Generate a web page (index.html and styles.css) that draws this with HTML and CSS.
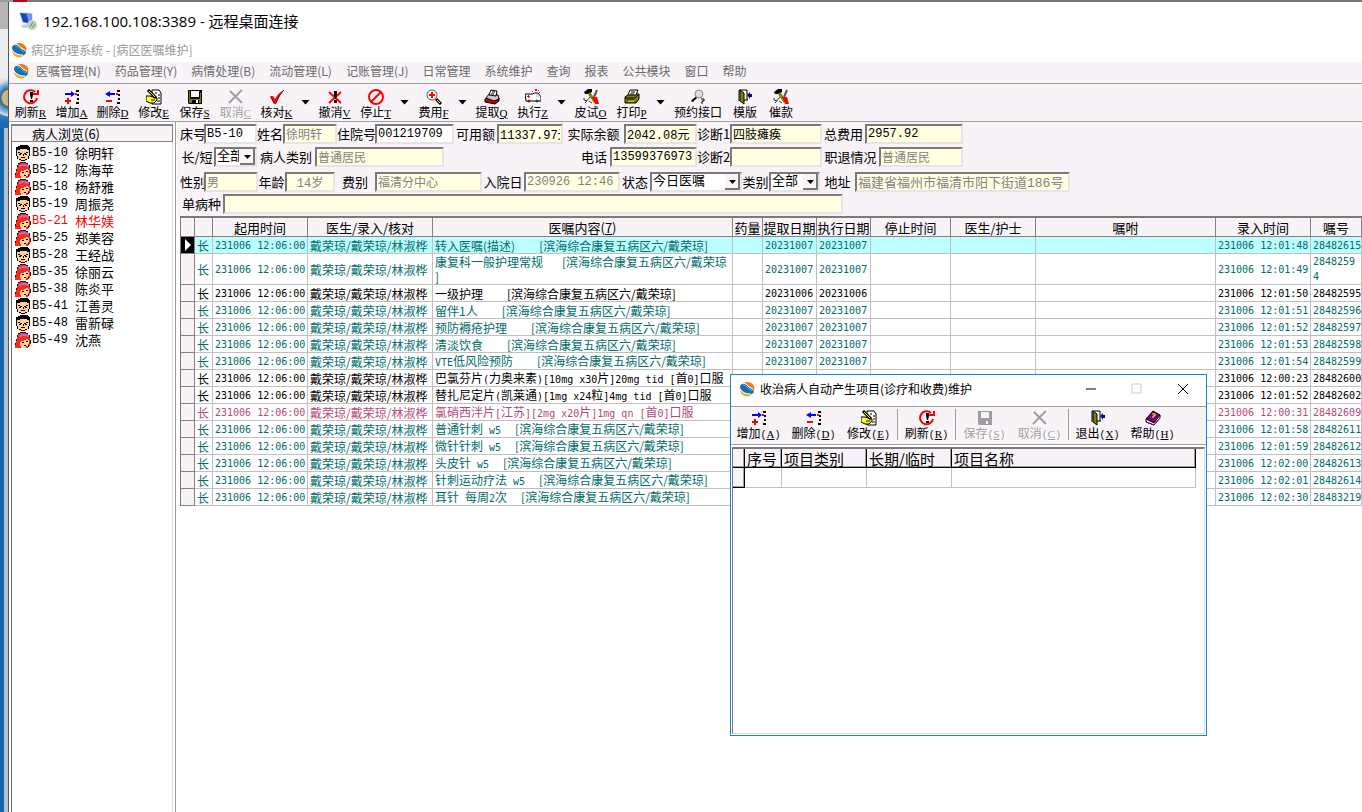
FILE: index.html
```
<!DOCTYPE html>
<html lang="zh-CN">
<head>
  <meta charset="utf-8">
  <title>病区护理系统</title>
  <link rel="stylesheet" href="styles.css">
</head>
<body>
  <svg class="defs" aria-hidden="true">
    <symbol id="i-logo" viewBox="0 0 16 16">
      <path d="M1 6C1 3 4 2 6 3c3 1 4 4 7 5 1 1 2 2 2 3-1 2-4 3-6 2C5 12 1 9 1 6z" fill="#1271b6"/>
      <path d="M4 2C8 0 13 1 15 5c1 2 0 4 0 5-1-2-3-3-5-4C8 4 7 2 4 2z" fill="#f47b0a"/>
      <path d="M1 8c1 3 4 4 7 5 2 0 4 0 5 0-2 3-7 3-9 1C2 13 1 11 1 8z" fill="#f7a823"/>
      <path d="M4 4c3 0 5 3 9 6" stroke="#63b5e6" stroke-width="1" fill="none"/>
      <path d="M5 2c3 1 4 4 9 6" stroke="#fff" stroke-width="1" fill="none"/>
      <path d="M1 8c2 3 5 5 11 5" stroke="#fff" stroke-width="1" fill="none"/>
    </symbol>
    <symbol id="i-remote" viewBox="0 0 20 20">
      <path d="M1 1l14 1v12L4 12z" fill="#dfe6f2"/>
      <path d="M2 2l12 1v10L5 11z" fill="#1c3fc4"/>
      <path d="M8 2l6 1v10l-3-1z" fill="#6f95ee"/>
      <path d="M3 14l8-1 3 3-9 1z" fill="#c3c9d6"/>
      <circle cx="14" cy="14" r="5" fill="#c4cfc4"/>
      <path d="M12 16l3-5M14 17l3-4" stroke="#4e9a4e" fill="none"/>
    </symbol>
    <symbol id="i-refresh" viewBox="0 0 16 16">
      <path d="M12 3a6.500 6.500 0 1 0 2 6" fill="none" stroke="#f00" stroke-width="2"/>
      <path d="M10 6h6V1h-2v3h-4z" fill="#f00"/>
      <path d="M7 3h3v3l-1 4H8L7 6zM7 11h3v2H7z" fill="#000"/>
    </symbol>
    <symbol id="i-add" viewBox="0 0 16 16">
      <path d="M1 4h6V2l4 3-4 3V6H1z" fill="#00f"/>
      <path d="M3 9h2v2h2v2H5v2H3v-2H1v-2h2z" fill="#f00"/>
      <path d="M12 1h3v2h-3zM13 5h2v2h-2zM13 9h2v2h-2zM12 13h3v2h-3z" fill="#000"/>
      <path d="M11 4h2v2h-2z" fill="#f00"/>
    </symbol>
    <symbol id="i-del" viewBox="0 0 16 16">
      <path d="M10 4H5V2L0 5l5 3V6h5z" fill="#00f"/>
      <path d="M1 11h6v2H1zM11 4h2v2h-2z" fill="#f00"/>
      <path d="M12 1h3v2h-3zM13 5h2v2h-2zM13 9h2v2h-2zM12 13h3v2h-3z" fill="#000"/>
    </symbol>
    <symbol id="i-edit" viewBox="0 0 16 16">
      <path d="M6 1h7l2 3v11H6z" fill="#fff" stroke="#000"/>
      <path d="M9 4h2M12 6h2M12 9h2M11 12h3" stroke="#000" fill="none"/>
      <path d="M0 7h4l3 1 4 1v2l-3 3H4l-4-2z" fill="#ffff2e" stroke="#000"/>
      <path d="M2 1l8 8" stroke="#000" stroke-width="3" fill="none"/>
      <path d="M3 2l6 6" stroke="#ff0" fill="none"/>
      <path d="M5 11h4" stroke="#000" fill="none"/>
    </symbol>
    <symbol id="i-save" viewBox="0 0 16 16">
      <path d="M1 1h14v14H2l-1-1z" fill="#000"/>
      <path d="M2 2h1v8h10V4h1v10H2z" fill="#808000"/>
      <path d="M4 2h8v6H4z" fill="#f7f3f7"/>
      <path d="M5 11h7v3H5z" fill="#000"/>
      <path d="M9 11h2v3H9z" fill="#fff"/>
    </symbol>
    <symbol id="i-saveoff" viewBox="0 0 16 16">
      <path d="M1 1h14v14H2l-1-1z" fill="#a09da0"/>
      <path d="M4 2h8v6H4zM9 11h2v3H9z" fill="#f7f3f7"/>
    </symbol>
    <symbol id="i-cancel" viewBox="0 0 16 16">
      <path d="M3 3l12 12M15 2L2 15" stroke="#fff" stroke-width="2" fill="none"/>
      <path d="M2 2l12 12M14 1L1 14" stroke="#a09da0" stroke-width="2" fill="none"/>
    </symbol>
    <symbol id="i-check" viewBox="0 0 16 16">
      <path d="M1 7l3 0 2 3C8 6 11 3 15 1 12 5 9 9 7 15H5z" fill="#f00"/>
      <path d="M2 8l3 6M7 14c2-6 5-10 8-13" stroke="#800000" fill="none"/>
    </symbol>
    <symbol id="i-undo" viewBox="0 0 16 16">
      <path d="M2 3l12 11M14 3L2 14" stroke="#f00" stroke-width="2" fill="none"/>
      <path d="M7 2h3v4l-1 4H8L7 6zM7 11h3v3H7z" fill="#000"/>
    </symbol>
    <symbol id="i-stop" viewBox="0 0 16 16">
      <circle cx="8" cy="8" r="7" fill="none" stroke="#f00" stroke-width="2"/>
      <path d="M3 13l10-10" stroke="#f00" stroke-width="2"/>
    </symbol>
    <symbol id="i-cost" viewBox="0 0 16 16">
      <path d="M10 10l5 5" stroke="#000" stroke-width="3"/>
      <path d="M11 11l3 3" stroke="#ff0"/>
      <circle cx="6" cy="6" r="5" fill="#fff" stroke="#555" stroke-width="1"/>
      <path d="M5 3h2v2h2v2H7v2H5V7H3V5h2z" fill="#f00"/>
    </symbol>
    <symbol id="i-fetch" viewBox="0 0 16 16">
      <path d="M1 10l5-3 9 2v3l-4 3-10-2z" fill="#d00000" stroke="#000"/>
      <path d="M2 9l3-4 9 1 1 4-5 2z" fill="#ccc" stroke="#000"/>
      <path d="M5 6l2-5 6 1-1 5z" fill="#fff" stroke="#000"/>
      <path d="M8 3h3M7 5h3" stroke="#000"/>
    </symbol>
    <symbol id="i-exec" viewBox="0 0 16 16">
      <path d="M0 5h8l1-1h4l3 4v4H1z" fill="#fff" stroke="#000"/>
      <path d="M11 5h1l2 3h-3z" fill="#b8d8e8"/>
      <path d="M3 6h1v1h1v1H4v1H3V8H2V7h1zM10 0h2v2h-2zM7 2h1v1H7zM13 1h1v1h-1zM14 3h1v1h-1z" fill="#f00"/>
      <circle cx="4" cy="12" r="1" fill="#fff" stroke="#000"/>
      <circle cx="12" cy="12" r="1" fill="#fff" stroke="#000"/>
    </symbol>
    <symbol id="i-tools" viewBox="0 0 16 16">
      <path d="M1 3l4-3h4v3L6 5H2z" fill="#000"/>
      <path d="M6 4l6 9" stroke="#808000" stroke-width="3"/>
      <path d="M14 1l-3 7" stroke="#555" stroke-width="2"/>
      <path d="M9 8h5l2 7h-4l-1-3z" fill="#f00"/>
      <path d="M7 8L2 14M1 9v2l3 1M6 12l3 2" stroke="#333" fill="none"/>
    </symbol>
    <symbol id="i-print" viewBox="0 0 16 16">
      <path d="M1 8l4-3 10 0v5l-3 4H1z" fill="#808000" stroke="#000"/>
      <path d="M4 6l2-5h8l-2 5z" fill="#fff" stroke="#000"/>
      <path d="M7 3h4M6 5h4M1 9h10l3-3M3 11h7" stroke="#000" fill="none"/>
      <path d="M4 12h6" stroke="#ff0"/>
    </symbol>
    <symbol id="i-book" viewBox="0 0 16 16">
      <path d="M7 8l-5 4" stroke="#000" stroke-width="2"/>
      <circle cx="9" cy="5" r="4" fill="#ddd" stroke="#888"/>
      <path d="M1 12h3M11 10h3v2h-2v3" stroke="#000" fill="none"/>
    </symbol>
    <symbol id="i-door" viewBox="0 0 16 16">
      <path d="M2 1h8v10M2 1v11" stroke="#000" fill="none"/>
      <path d="M3 1l4 3v11l-4-3z" fill="#808000" stroke="#000"/>
      <path d="M7 11h4" stroke="#000"/>
      <path d="M10 6l3-3v2h2v3h-2v2z" fill="#000080"/>
    </symbol>
    <symbol id="i-help" viewBox="0 0 16 16">
      <path d="M1 9l7-8 7 4-6 8z" fill="#800080" stroke="#000"/>
      <path d="M1 9v3l8 3 6-7V5l-6 8z" fill="#fff" stroke="#000"/>
      <path d="M1 12l8 3 6-7" stroke="#800080" fill="none"/>
      <path d="M7 4h3v2H8v2" stroke="#ff0" fill="none"/>
    </symbol>
    <symbol id="i-man" viewBox="0 0 16 16">
      <path d="M2 4h12v3h1v4h-1v3h-2v2H4v-2H2v-3H1V7h1z" fill="#ffcf9c"/>
      <path d="M3 1h2V0h8v1h1v1h1v5h-1V5h-2V4H5v1H2v2H1V2h2z" fill="#000"/>
      <path d="M1 7h1v4H1zM14 7h1v4h-1zM2 11h1v3H2zM13 11h1v3h-1zM4 14h2v1H4zM10 14h2v1h-2zM6 15h4v1H6z" fill="#000"/>
      <path d="M3 7h2v1H3zM5 8h2v1H5zM11 7h2v1h-2zM9 8h2v1H9zM4 9h2v1H4zM10 9h2v1h-2zM8 9h1v2H8zM6 12h4v1H6z" fill="#000"/>
    </symbol>
    <symbol id="i-woman" viewBox="0 0 16 16">
      <path d="M5 0h6v1h2v2h2v11h-2v2H0v-3h1V9h1V5h1V2h2z" fill="#ff2a10"/>
      <path d="M6 9h3V8h2V7h2v1h1v4h-1v2h-2v2H6v-2H5v-4h1z" fill="#ffcf9c"/>
      <path d="M4 3h2V2h6v1h2v2h-2V4H6v1H4z" fill="#a070f0"/>
      <path d="M5 0h6v1H5zM3 1h2v1H3zM11 1h2v1h-2zM2 3h1v2H2zM14 3h1v3h-1zM1 7h1v2H1zM0 11h1v2H0zM15 8h1v4h-1zM13 13h1v2h-1z" fill="#400"/>
      <path d="M7 10h2v1H7zM11 9h2v1h-2zM9 13h2v1H9z" fill="#000"/>
    </symbol>
  </svg>

  <div class="desk-top"></div>
  <div class="screen">
    <div class="desk-left"></div>
    <div class="window">
      <div class="title"><svg class="remote"><use href="#i-remote"/></svg>192.168.100.108:3389 - 远程桌面连接</div>
      <div class="caption"><svg class="icon"><use href="#i-logo"/></svg>病区护理系统 - [病区医嘱维护]</div>
      <nav class="menu">
        <svg class="icon"><use href="#i-logo"/></svg>
        <a href="#">医嘱管理(N)</a>
        <a href="#">药品管理(Y)</a>
        <a href="#">病情处理(B)</a>
        <a href="#">流动管理(L)</a>
        <a href="#">记账管理(J)</a>
        <a href="#">日常管理</a>
        <a href="#">系统维护</a>
        <a href="#">查询</a>
        <a href="#">报表</a>
        <a href="#">公共模块</a>
        <a href="#">窗口</a>
        <a href="#">帮助</a>
      </nav>
      <div class="toolbar">
        <button><svg class="icon"><use href="#i-refresh"/></svg>刷新<u>R</u></button>
        <button><svg class="icon"><use href="#i-add"/></svg>增加<u>A</u></button>
        <button><svg class="icon"><use href="#i-del"/></svg>删除<u>D</u></button>
        <button><svg class="icon"><use href="#i-edit"/></svg>修改<u>E</u></button>
        <button><svg class="icon"><use href="#i-save"/></svg>保存<u>S</u></button>
        <button disabled><svg class="icon"><use href="#i-cancel"/></svg>取消<u>C</u></button>
        <button><svg class="icon"><use href="#i-check"/></svg>核对<u>K</u></button>
        <button class="drop" aria-label="核对选项"></button>
        <button><svg class="icon"><use href="#i-undo"/></svg>撤消<u>V</u></button>
        <button><svg class="icon"><use href="#i-stop"/></svg>停止<u>T</u></button>
        <button class="drop" aria-label="停止选项"></button>
        <button><svg class="icon"><use href="#i-cost"/></svg>费用<u>F</u></button>
        <button class="drop" aria-label="费用选项"></button>
        <button><svg class="icon"><use href="#i-fetch"/></svg>提取<u>Q</u></button>
        <button><svg class="icon"><use href="#i-exec"/></svg>执行<u>Z</u></button>
        <button class="drop" aria-label="执行选项"></button>
        <button><svg class="icon"><use href="#i-tools"/></svg>皮试<u>O</u></button>
        <button><svg class="icon"><use href="#i-print"/></svg>打印<u>P</u></button>
        <button class="drop" aria-label="打印选项"></button>
        <button class="wide"><svg class="icon"><use href="#i-book"/></svg>预约接口</button>
        <button class="narrow"><svg class="icon"><use href="#i-door"/></svg>模版</button>
        <button class="narrow"><svg class="icon"><use href="#i-tools"/></svg>催款</button>
      </div>

      <div class="main">
        <aside class="patients">
          <div class="list-head">病人浏览(6)</div>
          <ul>
            <li class="selected"><svg class="icon"><use href="#i-man"/></svg><span class="bed">B5-10</span>徐明轩</li>
            <li><svg class="icon"><use href="#i-woman"/></svg><span class="bed">B5-12</span>陈海苹</li>
            <li><svg class="icon"><use href="#i-woman"/></svg><span class="bed">B5-18</span>杨舒雅</li>
            <li><svg class="icon"><use href="#i-man"/></svg><span class="bed">B5-19</span>周振尧</li>
            <li class="red"><svg class="icon"><use href="#i-woman"/></svg><span class="bed">B5-21</span>林华媄</li>
            <li><svg class="icon"><use href="#i-woman"/></svg><span class="bed">B5-25</span>郑美容</li>
            <li><svg class="icon"><use href="#i-man"/></svg><span class="bed">B5-28</span>王经战</li>
            <li><svg class="icon"><use href="#i-woman"/></svg><span class="bed">B5-35</span>徐丽云</li>
            <li><svg class="icon"><use href="#i-woman"/></svg><span class="bed">B5-38</span>陈炎平</li>
            <li><svg class="icon"><use href="#i-man"/></svg><span class="bed">B5-41</span>江善灵</li>
            <li><svg class="icon"><use href="#i-man"/></svg><span class="bed">B5-48</span>雷新碌</li>
            <li><svg class="icon"><use href="#i-woman"/></svg><span class="bed">B5-49</span>沈燕</li>
          </ul>
        </aside>

        <section class="work">
          <form class="info">
            <div class="row row1">
              <label for="bed">床号</label><input id="bed" class="white" value="B5-10">
              <label for="name">姓名</label><input id="name" value="徐明轩" disabled>
              <label for="hosp">住院号</label><input id="hosp" class="white" value="001219709">
              <label for="avail">可用额</label><input id="avail" value="11337.97元">
              <label for="real">实际余额</label><input id="real" value="2042.08元">
              <label for="diag1">诊断1</label><input id="diag1" value="四肢瘫痪">
              <label for="total">总费用</label><input id="total" value="2957.92">
            </div>
            <div class="row row2">
              <label for="term">长/短</label><select id="term"><option>全部</option></select>
              <label for="ptype">病人类别</label><input id="ptype" value="普通居民" disabled>
              <label for="phone" class="right">电话</label><input id="phone" value="13599376973">
              <label for="diag2">诊断2</label><input id="diag2" value="">
              <label for="work">职退情况</label><input id="work" value="普通居民" disabled>
            </div>
            <div class="row row3">
              <label for="sex">性别</label><input id="sex" value="男" disabled>
              <label for="age">年龄</label><input id="age" class="center" value="14岁" disabled>
              <label for="fee">费别</label><input id="fee" value="福清分中心" disabled>
              <label for="indate">入院日</label><input id="indate" value="230926 12:46" disabled>
              <label for="state">状态</label><select id="state"><option>今日医嘱</option></select>
              <label for="kind">类别</label><select id="kind"><option>全部</option></select>
              <label for="addr">地址</label><input id="addr" class="addr" value="福建省福州市福清市阳下街道186号" disabled>
            </div>
            <div class="row row4">
              <label for="single">单病种</label><input id="single" value="">
            </div>
          </form>

          <table class="orders">
            <colgroup>
              <col class="c-mark"><col class="c-type"><col class="c-time"><col class="c-doc"><col class="c-text"><col class="c-dose"><col class="c-date"><col class="c-date"><col class="c-stop"><col class="c-nurse"><col><col class="c-time"><col class="c-no">
            </colgroup>
            <thead>
              <tr><th></th><th></th><th>起用时间</th><th>医生/录入/核对</th><th>医嘱内容(<u>7</u>)</th><th>药量</th><th>提取日期</th><th>执行日期</th><th>停止时间</th><th>医生/护士</th><th>嘱咐</th><th>录入时间</th><th>嘱号</th></tr>
            </thead>
            <tbody>
              <tr class="current"><td class="mark"></td><td>长</td><td class="num">231006 12:06:00</td><td>戴荣琼/戴荣琼/林淑桦</td><td>转入医嘱(描述)<span class="dept far">[滨海综合康复五病区六/戴荣琼]</span></td><td></td><td class="num">20231007</td><td class="num">20231007</td><td></td><td></td><td></td><td class="num">231006 12:01:48</td><td class="num">28482615</td></tr>
              <tr class="tall"><td class="mark"></td><td>长</td><td class="num">231006 12:06:00</td><td>戴荣琼/戴荣琼/林淑桦</td><td>康复科一般护理常规<span class="dept">[滨海综合康复五病区六/戴荣琼<br>]</span></td><td></td><td class="num">20231007</td><td class="num">20231007</td><td></td><td></td><td></td><td class="num">231006 12:01:49</td><td class="num">2848259<br>4</td></tr>
              <tr class="black"><td class="mark"></td><td>长</td><td class="num">231006 12:06:00</td><td>戴荣琼/戴荣琼/林淑桦</td><td>一级护理<span class="dept far">[滨海综合康复五病区六/戴荣琼]</span></td><td></td><td class="num">20231006</td><td class="num">20231006</td><td></td><td></td><td></td><td class="num">231006 12:01:50</td><td class="num">28482595</td></tr>
              <tr><td class="mark"></td><td>长</td><td class="num">231006 12:06:00</td><td>戴荣琼/戴荣琼/林淑桦</td><td>留伴1人<span class="dept far">[滨海综合康复五病区六/戴荣琼]</span></td><td></td><td class="num">20231007</td><td class="num">20231007</td><td></td><td></td><td></td><td class="num">231006 12:01:51</td><td class="num">28482596</td></tr>
              <tr><td class="mark"></td><td>长</td><td class="num">231006 12:06:00</td><td>戴荣琼/戴荣琼/林淑桦</td><td>预防褥疮护理<span class="dept far">[滨海综合康复五病区六/戴荣琼]</span></td><td></td><td class="num">20231007</td><td class="num">20231007</td><td></td><td></td><td></td><td class="num">231006 12:01:52</td><td class="num">28482597</td></tr>
              <tr><td class="mark"></td><td>长</td><td class="num">231006 12:06:00</td><td>戴荣琼/戴荣琼/林淑桦</td><td>清淡饮食<span class="dept far">[滨海综合康复五病区六/戴荣琼]</span></td><td></td><td class="num">20231007</td><td class="num">20231007</td><td></td><td></td><td></td><td class="num">231006 12:01:53</td><td class="num">28482598</td></tr>
              <tr><td class="mark"></td><td>长</td><td class="num">231006 12:06:00</td><td>戴荣琼/戴荣琼/林淑桦</td><td><span class="en">VTE</span>低风险预防<span class="dept far">[滨海综合康复五病区六/戴荣琼]</span></td><td></td><td class="num">20231007</td><td class="num">20231007</td><td></td><td></td><td></td><td class="num">231006 12:01:54</td><td class="num">28482599</td></tr>
              <tr class="black"><td class="mark"></td><td>长</td><td class="num">231006 12:06:00</td><td>戴荣琼/戴荣琼/林淑桦</td><td>巴氯芬片<span class="en">(</span>力奥来素<span class="en">)[10mg x30</span>片<span class="en">]20mg tid [</span>首<span class="en">0]</span>口服</td><td></td><td></td><td></td><td></td><td></td><td></td><td class="num">231006 12:00:23</td><td class="num">28482600</td></tr>
              <tr class="black"><td class="mark"></td><td>长</td><td class="num">231006 12:06:00</td><td>戴荣琼/戴荣琼/林淑桦</td><td>替扎尼定片<span class="en">(</span>凯莱通<span class="en">)[1mg x24</span>粒<span class="en">]4mg tid [</span>首<span class="en">0]</span>口服</td><td></td><td></td><td></td><td></td><td></td><td></td><td class="num">231006 12:01:52</td><td class="num">28482602</td></tr>
              <tr class="pink"><td class="mark"></td><td>长</td><td class="num">231006 12:06:00</td><td>戴荣琼/戴荣琼/林淑桦</td><td>氯硝西泮片<span class="en">[</span>江苏<span class="en">][2mg x20</span>片<span class="en">]1mg qn [</span>首<span class="en">0]</span>口服</td><td></td><td></td><td></td><td></td><td></td><td></td><td class="num">231006 12:00:31</td><td class="num">28482609</td></tr>
              <tr><td class="mark"></td><td>长</td><td class="num">231006 12:06:00</td><td>戴荣琼/戴荣琼/林淑桦</td><td>普通针刺<span class="en"> w5</span><span class="dept near">[滨海综合康复五病区六/戴荣琼]</span></td><td></td><td></td><td></td><td></td><td></td><td></td><td class="num">231006 12:01:58</td><td class="num">28482611</td></tr>
              <tr><td class="mark"></td><td>长</td><td class="num">231006 12:06:00</td><td>戴荣琼/戴荣琼/林淑桦</td><td>微针针刺<span class="en"> w5</span><span class="dept near">[滨海综合康复五病区六/戴荣琼]</span></td><td></td><td></td><td></td><td></td><td></td><td></td><td class="num">231006 12:01:59</td><td class="num">28482612</td></tr>
              <tr><td class="mark"></td><td>长</td><td class="num">231006 12:06:00</td><td>戴荣琼/戴荣琼/林淑桦</td><td>头皮针<span class="en"> w5</span><span class="dept near">[滨海综合康复五病区六/戴荣琼]</span></td><td></td><td></td><td></td><td></td><td></td><td></td><td class="num">231006 12:02:00</td><td class="num">28482613</td></tr>
              <tr><td class="mark"></td><td>长</td><td class="num">231006 12:06:00</td><td>戴荣琼/戴荣琼/林淑桦</td><td>针刺运动疗法<span class="en"> w5</span><span class="dept near">[滨海综合康复五病区六/戴荣琼]</span></td><td></td><td></td><td></td><td></td><td></td><td></td><td class="num">231006 12:02:01</td><td class="num">28482614</td></tr>
              <tr><td class="mark"></td><td>长</td><td class="num">231006 12:06:00</td><td>戴荣琼/戴荣琼/林淑桦</td><td>耳针<span class="en"> </span>每周<span class="en">2</span>次<span class="dept near">[滨海综合康复五病区六/戴荣琼]</span></td><td></td><td></td><td></td><td></td><td></td><td></td><td class="num">231006 12:02:30</td><td class="num">28483219</td></tr>
            </tbody>
          </table>
        </section>
      </div>
    </div>
  </div>

  <div class="dialog" role="dialog" aria-label="收治病人自动产生项目(诊疗和收费)维护">
    <div class="dialog-title">
      <svg class="icon"><use href="#i-logo"/></svg>
      <span>收治病人自动产生项目(诊疗和收费)维护</span>
      <button aria-label="最小化"><svg viewBox="0 0 12 12"><path d="M1 6h10" stroke="#000"/></svg></button>
      <button aria-label="最大化" disabled><svg viewBox="0 0 12 12"><path d="M1 1h9v9H1z" fill="none" stroke="#ccc"/></svg></button>
      <button aria-label="关闭"><svg viewBox="0 0 12 12"><path d="M1 1l10 10M11 1L1 11" stroke="#000"/></svg></button>
    </div>
    <div class="toolbar dialog-bar">
      <button><svg class="icon"><use href="#i-add"/></svg>增加<span class="key">(<u>A</u>)</span></button>
      <button><svg class="icon"><use href="#i-del"/></svg>删除<span class="key">(<u>D</u>)</span></button>
      <button><svg class="icon"><use href="#i-edit"/></svg>修改<span class="key">(<u>E</u>)</span></button>
      <i class="sep"></i>
      <button><svg class="icon"><use href="#i-refresh"/></svg>刷新<span class="key">(<u>R</u>)</span></button>
      <i class="sep"></i>
      <button disabled><svg class="icon"><use href="#i-saveoff"/></svg>保存<span class="key">(<u>S</u>)</span></button>
      <button disabled><svg class="icon"><use href="#i-cancel"/></svg>取消<span class="key">(<u>C</u>)</span></button>
      <i class="sep"></i>
      <button><svg class="icon"><use href="#i-door"/></svg>退出<span class="key">(<u>X</u>)</span></button>
      <button><svg class="icon"><use href="#i-help"/></svg>帮助<span class="key">(<u>H</u>)</span></button>
    </div>
    <div class="dialog-body">
      <table class="items">
        <colgroup><col class="d-mark"><col class="d-no"><col class="d-type"><col class="d-type"><col></colgroup>
        <thead><tr><th></th><th>序号</th><th>项目类别</th><th>长期/临时</th><th>项目名称</th></tr></thead>
        <tbody><tr><td class="mark"></td><td></td><td></td><td></td><td></td></tr></tbody>
      </table>
    </div>
  </div>
</body>
</html>
```
FILE: styles.css
```
*{
  box-sizing: border-box;
}

body{
  margin: 0;
  height: 100vh;
  overflow: hidden;
  display: flex;
  flex-direction: column;
  background-color: white;
  color: black;
  font-family: "Noto Sans CJK SC", sans-serif;
  font-size: 12px;
  line-height: 16px;
}

.defs{
  display: none;
}

.icon{
  width: 16px;
  height: 16px;
  flex: none;
}

button,
input,
select{
  font-family: inherit;
  font-size: inherit;
  color: inherit;
  margin: 0;
}

/* desktop behind the window */
.desk-top{
  height: 2px;
  flex: none;
  background: linear-gradient(to right, #999 13px, #c00010 13px, #c00010 27px, #777 27px);
}

.screen{
  flex: 1;
  min-height: 0;
  display: flex;
}

.desk-left{
  width: 9px;
  flex: none;
  border-right: 1px solid #555;
  background:
    radial-gradient(circle at 10px 96px, #7fc0ea 4px, #f5b13c 6px, #f5b13c 8px, #1b6cb0 9px, #cfe0ee 18px, transparent 19px),
    linear-gradient(to right, #1565ad 4px, #b4c0ca 4px) 0 126px no-repeat,
    linear-gradient(#b5b5b5 27px, #ededed 27px, #ededed 75px, #1b6cb0 120px);
}

.window{
  flex: 1;
  min-width: 0;
  display: flex;
  flex-direction: column;
}

.title{
  height: 38px;
  flex: none;
  display: flex;
  align-items: center;
  gap: 5px;
  padding-left: 9px;
  font-family: "Open Sans", "Noto Sans CJK SC", sans-serif;
  font-size: 15px;
}

.remote{
  width: 20px;
  height: 20px;
}

.caption{
  height: 22px;
  flex: none;
  display: flex;
  align-items: center;
  gap: 4px;
  padding: 0 0 2px 2px;
  color: #999;
}

.menu{
  height: 21px;
  flex: none;
  display: flex;
  align-items: center;
  gap: 14px;
  padding: 0 0 4px 4px;
  background-color: #f7f3f7;
}
.menu .icon{
  margin-right: -7px;
}
.menu a{
  color: #6b6b6b;
  text-decoration: none;
}

.toolbar{
  height: 39px;
  flex: none;
  display: flex;
  background-color: #f7f3f7;
  border-top: 1px solid #a0a0a0;
  border-bottom: 1px solid #a0a0a0;
  padding: 3px 0 0 1px;
}
.toolbar button{
  width: 41px;
  padding: 0;
  border: 0;
  background: none;
  line-height: 14px;
  white-space: nowrap;
}
.toolbar button .icon{
  display: block;
  margin: 0 auto;
}
.toolbar button:disabled{
  color: #a09da0;
  text-shadow: 1px 1px white;
}
.toolbar u{
  font-family: "Liberation Serif", serif;
  font-size: 11px;
}
.toolbar .wide{
  width: 58px;
}
.toolbar .narrow{
  width: 36px;
}
.toolbar .drop{
  width: 17px;
  padding-bottom: 4px;
}
.drop::before{
  content: "";
  display: block;
  margin: 0 auto;
  width: 9px;
  height: 5px;
  background-color: black;
  clip-path: polygon(0 0, 100% 0, 50% 100%);
}

.main{
  flex: 1;
  min-height: 0;
  display: flex;
}

/* patient list */
.patients{
  width: 167px;
  flex: none;
  padding-top: 2px;
  border-right: 1px solid #a0a0a0;
}

.list-head{
  height: 18px;
  margin: 0 2px;
  padding-left: 20px;
  border: 1px solid #848284;
  border-top-width: 2px;
  background-color: #f7f3f7;
  font-size: 13px;
  line-height: 15px;
}

.patients ul{
  list-style: none;
  margin: 0 2px;
  padding: 2px 0 0 3px;
  height: calc(100% - 18px);
  border-left: 1px solid #6b6b6b;
  border-right: 1px solid #ddd;
}
.patients li{
  height: 17px;
  display: flex;
  align-items: center;
  gap: 1px;
  width: 104px;
  font-size: 13px;
}
.patients .icon{
  shape-rendering: crispEdges;
}
.patients .selected{
  background: linear-gradient(to right, white 16px, #f7f3f7 16px);
}
.patients .red{
  color: red;
}

.bed{
  width: 42px;
  font-family: "Liberation Mono", monospace;
  font-size: 12px;
}

/* patient info */
.work{
  flex: 1;
  min-width: 0;
  margin-left: 4px;
  display: flex;
  flex-direction: column;
}

.info{
  padding: 1px 0 2px;
  background-color: #f7f3f7;
  box-shadow: -3px 0 #f7f3f7;
}

.row{
  display: grid;
  align-items: center;
}
.row1{
  height: 22px;
  grid-template-columns: 24px 53px 26px 54px 38px 79px 43px 66px 61px 73px 33px 92px 43px 98px;
}
.row2{
  height: 24px;
  grid-template-columns: 34px 43px 58px 129px 166px 87px 33px 92px 57px 84px;
}
.row3{
  height: 25px;
  grid-template-columns: 24px 54px 27px 50px 40px 107px 42px 96px 30px 92px 27px 51px 35px 215px;
}
.row4{
  height: 20px;
  grid-template-columns: 43px 620px;
}

.row label{
  font-size: 13px;
  text-align: center;
  white-space: nowrap;
}
.row .right{
  text-align: right;
  padding-right: 3px;
}

.row input,
.row select{
  width: 100%;
  height: 20px;
  min-width: 0;
  border: 2px solid;
  border-color: #7b797b #e7e3e7 #e7e3e7 #7b797b;
  border-radius: 0;
  background-color: #ffffe1;
  padding: 0 1px;
  font-family: "Liberation Mono", "Noto Sans CJK SC", monospace;
  font-size: 12px;
}
.row input:disabled{
  color: #848284;
}
.row input.white{
  background-color: white;
}
.row input.center{
  text-align: center;
}
.row input.addr{
  font-size: 13px;
}
.row select{
  appearance: none;
  padding-right: 16px;
  font-size: 13px;
  line-height: 16px;
  background: white url("data:image/svg+xml,%3Csvg xmlns='http://www.w3.org/2000/svg' width='15' height='16'%3E%3Cpath d='M0 0h15v16H0z' fill='%23f7f3f7'/%3E%3Cpath d='M0 15h14V0' fill='none' stroke='%23777' stroke-width='2'/%3E%3Cpath d='M4 6h7l-3.5 4z'/%3E%3C/svg%3E") right center no-repeat;
}

/* orders grid */
table{
  border-collapse: separate;
  border-spacing: 0;
  table-layout: fixed;
}

.orders{
  width: 100%;
  border-top: 2px solid #7b797b;
  border-left: 1px solid #7b797b;
}
.orders th,
.orders td{
  border-right: 1px solid #c0c0c0;
  border-bottom: 1px solid #c0c0c0;
  overflow: hidden;
  white-space: nowrap;
}
.orders th{
  height: 19px;
  padding: 0;
  border-color: #848284;
  background-color: #f7f3f7;
  font-size: 13px;
  font-weight: 400;
  line-height: 15px;
}
.orders td{
  height: 17px;
  padding: 0 0 0 2px;
  line-height: 13px;
}
.orders tbody tr{
  color: #006d6b;
}
.orders .tall td{
  height: 31px;
  line-height: 15px;
}
.orders tr.black{
  color: black;
}
.orders tr.pink{
  color: #b5497b;
}
.orders .current td{
  background-color: #bdffff;
}
.orders .mark{
  padding: 0;
  background-color: #f7f3f7;
  border-color: #848284;
}
.orders .current .mark{
  background-color: black;
}
.current .mark::before{
  content: "";
  display: block;
  margin-left: 4px;
  width: 6px;
  height: 12px;
  background-color: white;
  clip-path: polygon(0 0, 100% 50%, 0 100%);
}

.orders .num,
.en{
  font-family: "DejaVu Sans Mono", monospace;
  font-size: 10px;
}
.en{
  white-space: pre;
}

.dept{
  margin-left: 19px;
}
.near{
  margin-left: 14px;
}
.far{
  margin-left: 24px;
}

.c-mark{ width: 14px; }
.c-type{ width: 18px; }
.c-time{ width: 95px; }
.c-doc{ width: 125px; }
.c-text{ width: 300px; }
.c-dose{ width: 30px; }
.c-date{ width: 54px; }
.c-stop{ width: 80px; }
.c-nurse{ width: 85px; }
.c-no{ width: 51px; }

/* dialog over the grid */
.dialog{
  position: absolute;
  left: 730px;
  top: 374px;
  width: 477px;
  height: 362px;
  display: flex;
  flex-direction: column;
  background-color: white;
  border: 1px solid #1883d7;
}

.dialog-title{
  height: 31px;
  flex: none;
  display: flex;
  align-items: center;
  padding: 0 0 3px 8px;
}
.dialog-title span{
  flex: 1;
  padding-left: 5px;
}
.dialog-title button{
  width: 46px;
  padding: 0;
  border: 0;
  background: none;
}
.dialog-title button svg{
  display: block;
  margin: 0 auto;
  width: 12px;
  height: 12px;
}

.dialog-bar{
  padding: 2px 0 0;
}
.dialog-bar button{
  width: 55px;
}
.key{
  font-family: "Liberation Mono", monospace;
  font-size: 10px;
}
.sep{
  width: 1px;
  height: 31px;
  margin: 0 1px;
  background-color: #a0a0a0;
}

.dialog-body{
  flex: 1;
  margin: 2px 1px 1px;
  border: 1px solid #ddd;
  border-top: 2px solid #7b797b;
  border-left-color: #7b797b;
}

.items{
  width: calc(100% - 8px);
}
.items th,
.items .mark{
  border: 1px solid black;
  border-width: 0 1px 1px 0;
  box-shadow: inset -1px -1px #a0a0a0;
  background-color: #f7f3f7;
}
.items th{
  height: 19px;
  padding: 0 0 0 2px;
  font-size: 15px;
  font-weight: 400;
  line-height: 17px;
  text-align: left;
}
.items td{
  height: 20px;
  padding: 0;
  border: 1px solid #c0c0c0;
  border-width: 0 1px 1px 0;
}
.d-mark{ width: 12px; }
.d-no{ width: 37px; }
.d-type{ width: 85px; }
```
